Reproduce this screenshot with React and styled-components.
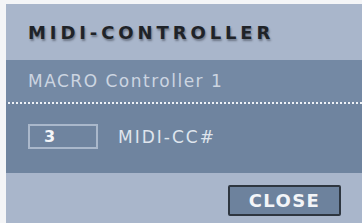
import styled, { createGlobalStyle } from "styled-components";

const GlobalStyle = createGlobalStyle`
  html, body {
    margin: 0;
    background: #f4f5f7;
  }
`;

const App = () => {
  return (
    <Page>
      <GlobalStyle />
      <Panel>
        <Header>
          <Title>MIDI-CONTROLLER</Title>
        </Header>
        <Body>
          <MacroRow>MACRO Controller 1</MacroRow>
          <Dots />
          <CCRow>
            <ValueBox>3</ValueBox>
            <CCLabel>MIDI-CC#</CCLabel>
          </CCRow>
        </Body>
        <Footer>
          <CloseButton>CLOSE</CloseButton>
        </Footer>
      </Panel>
    </Page>
  );
};

export default App;

const Page = styled.div`
  padding: 4px 0 0 6px;
  width: 356px;
  height: 219px;
`;

const Panel = styled.div`
  display: flex;
  flex-direction: column;
  width: 356px;
  height: 219px;
  background-color: #a9b6cb;
  font-family: "DejaVu Sans", sans-serif;
`;

const Header = styled.div`
  display: flex;
  align-items: center;
  height: 56px;
  padding-left: 22px;
`;

const Title = styled.h1`
  margin: 0;
  font-size: 18px;
  font-weight: bold;
  letter-spacing: 3.9px;
  color: #1f2328;
  text-shadow: 1px 2px 2px rgba(40, 45, 55, 0.45);
`;

const Body = styled.div`
  display: flex;
  flex-direction: column;
  height: 113px;
  background-color: #6f849f;
`;

const MacroRow = styled.div`
  display: flex;
  align-items: center;
  height: 42px;
  padding-left: 22px;
  background-color: #7489a4;
  color: #ccd5e1;
  font-size: 17px;
  letter-spacing: 1.5px;
`;

const Dots = styled.div`
  height: 2px;
  margin: 0 0 0 1px;
  background-image: radial-gradient(circle, #eef2f7 0.9px, transparent 1.1px);
  background-size: 4px 2px;
`;

const CCRow = styled.div`
  display: flex;
  align-items: center;
  gap: 20px;
  padding: 20px 0 0 22px;
`;

const ValueBox = styled.div`
  width: 52px;
  height: 21px;
  padding-left: 14px;
  border: 2px solid #aab8cb;
  color: #f4f6f9;
  font-size: 16px;
  font-weight: bold;
  line-height: 21px;
`;

const CCLabel = styled.span`
  color: #dfe5ed;
  font-size: 17px;
  letter-spacing: 2px;
`;

const Footer = styled.div`
  display: flex;
  flex: 1;
  align-items: center;
  justify-content: flex-end;
  padding-right: 21px;
`;

const CloseButton = styled.button`
  width: 113px;
  height: 31px;
  margin-top: 4px;
  border: 2px solid #2e3640;
  border-radius: 2px;
  background-color: #6d829d;
  color: #f3f5f8;
  font-family: "DejaVu Sans", sans-serif;
  font-size: 18px;
  font-weight: bold;
  letter-spacing: 1.4px;
`;
